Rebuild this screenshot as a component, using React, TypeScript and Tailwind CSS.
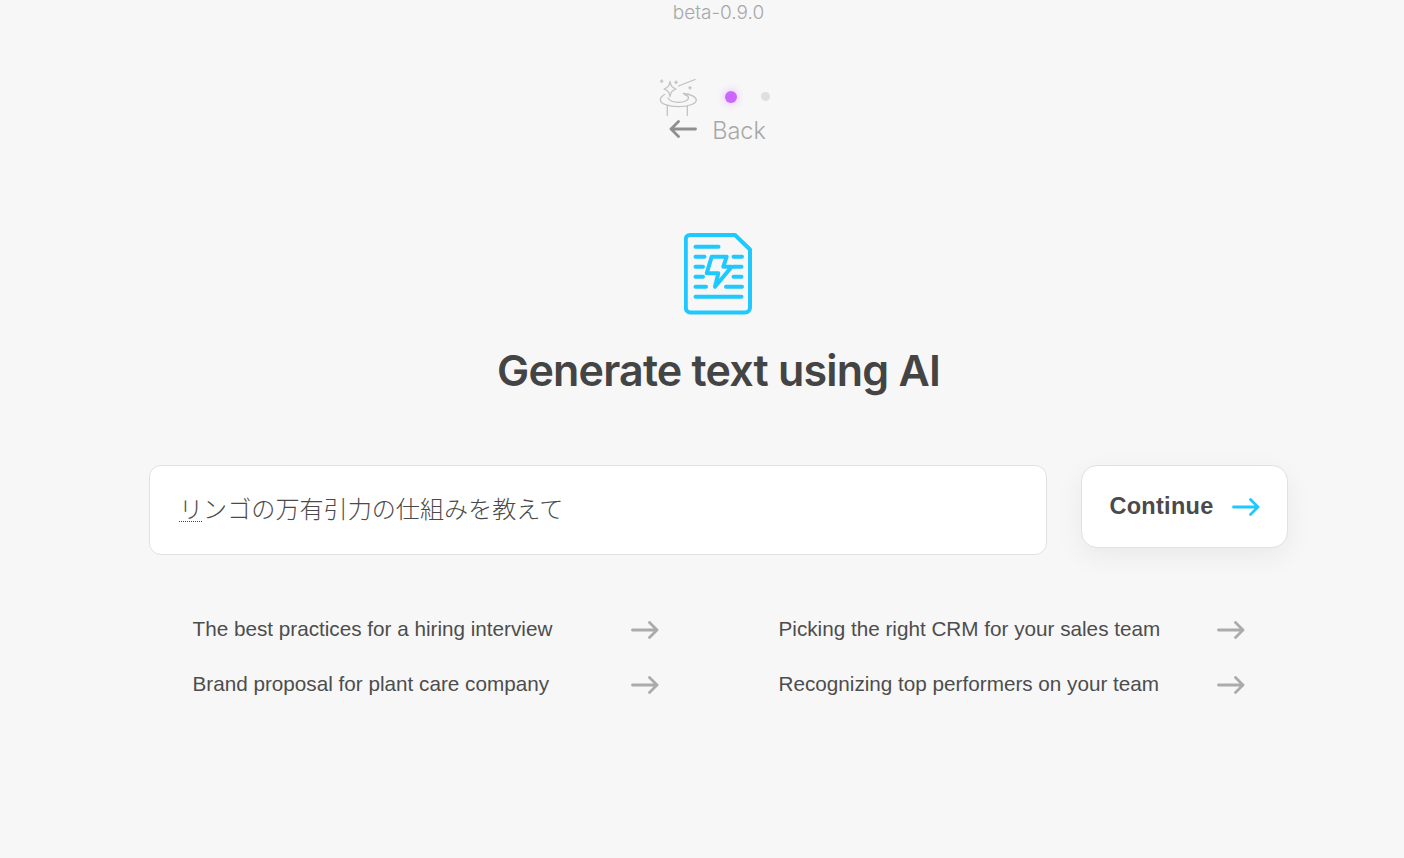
const sans = "font-['Liberation_Sans',Arial,sans-serif]";

function Arrow({ className, left }: { className: string; left?: boolean }) {
  return (
    <svg viewBox="0 0 28 18" fill="none" className={className} stroke="currentColor" strokeWidth="2.8" strokeLinecap="round" strokeLinejoin="round">
      <path d={left ? "M26.500 9H2M9.500 1.500 2 9l7.500 7.500" : "M1.500 9H26M18.500 1.500 26 9l-7.500 7.500"} />
    </svg>
  );
}

function Suggestion({ text }: { text: string }) {
  return (
    <div className="flex h-[55px] items-center justify-between">
      <span className={`${sans} text-[20.7px] leading-none text-[#4d4d4d]`}>{text}</span>
      <Arrow className="h-[18px] w-[28px] text-[#ababab]" />
    </div>
  );
}

export default function App() {
  return (
    <div className={`h-[858px] w-[1404px] overflow-hidden bg-[#f7f7f7] ${sans}`}>
      <div className="ml-[149px] flex w-[1139px] flex-col items-center">
        <div className="mt-[2px] h-[22px] font-['Inter',sans-serif] text-[19px] leading-[22px] font-light text-[#a8a8a8]">beta-0.9.0</div>

        <div className="mt-[53px] mr-[8px] flex h-[39px] items-center">
          <svg viewBox="0 0 38 38" fill="none" className="h-[38px] w-[38px] text-[#c2c2c2]" stroke="currentColor" strokeWidth="1.300" strokeLinecap="round" strokeLinejoin="round">
            <path d="M11 3.500c.8 4.500 2 6 6 7.500-4 1.500-5.200 3-6 7.500-.8-4.500-2-6-6-7.500 4-1.500 5.200-3 6-7.500Z" />
            <path d="M19.500 8 36 1.500M2.700 1.800v2.600M1.400 3.100H4M17 3v2.600M15.700 4.300h2.600M31 8.500v2.600M29.700 9.800h2.600" />
            <path d="M5.500 16.500C3 18 1.300 20 1.300 22c0 3.600 8 6.700 18 6.700s18-3 18-6.700c0-3.200-5.500-5.800-13-6.500" />
            <path d="M9 20c1.500 2.800 5.500 4.300 10.500 4.300 5.500 0 10-2 10-4.300 0-1.500-1.500-2.800-4-3.500" />
            <path d="M8.300 28v9.500M28.300 28v9.500" />
          </svg>
          <span className="ml-[28px] h-[12px] w-[12px] rounded-full bg-[#cc66ff] shadow-[0_0_8px_#e2b0ff]" />
          <span className="ml-[24px] h-[9px] w-[9px] rounded-full bg-[#dfdfdf]" />
        </div>

        <div className="flex h-[30px] items-center font-['Inter',sans-serif] text-[#a8a8a8]">
          <Arrow left className="h-[18px] w-[28px] -translate-x-[2px] -translate-y-[2px] text-[#8f8f8f]" />
          <span className="ml-[13px] text-[23.500px] leading-none font-light">Back</span>
        </div>

        <svg viewBox="0 0 68 82" fill="none" className="mt-[87px] mr-[1px] h-[82px] w-[68px] text-[#1fc8ff]" stroke="currentColor" strokeWidth="4" strokeLinecap="round" strokeLinejoin="round">
          <path d="M6 2h45L66 16.500V74.500c0 2.800-2.200 5-5 5H6.500c-2.800 0-4.700-1.900-4.700-4.700V6.500C1.800 3.700 3.400 2 6 2Z" />
          <path d="M11.500 13.700h23M11.500 23.700h9M11.500 33.700h7.500M11.500 43.700h7.500M11.500 53.700h10.500M11.500 63.700h46M49.500 23.700h8.500M49.500 33.700h8M49.500 43.700h8M42 53.700h16" />
          <path d="M27.700 23.700h15l-3.400 10h8.400L31 53.700l3.300-13.400H22.700l5-16.600Z" />
        </svg>

        <h1 className="mt-[29px] font-['Inter',sans-serif] text-[43px] leading-[52px] font-semibold tracking-[-0.8px] text-[#444444]">Generate text using AI</h1>

        <div className="mt-[69px] flex w-full items-start justify-between">
          <div className="flex h-[90px] w-[898px] items-center rounded-[12px] border border-[#e1e1e1] bg-white pb-[4px] pl-[29px]">
            <span className="font-['Noto_Sans_CJK_JP',sans-serif] text-[24.100px] leading-none font-light text-[#4a4a4a]">
              <span className="underline decoration-dotted decoration-1 underline-offset-[3px]">リ</span>ンゴの万有引力の仕組みを教えて
            </span>
          </div>
          <button className="flex h-[83px] w-[207px] items-center justify-center gap-[18px] rounded-[16px] border border-[#e1e1e1] bg-white shadow-[0_8px_28px_rgba(0,0,0,0.06)]">
            <span className="text-[23.500px] leading-none font-bold tracking-[0.3px] text-[#4a4a4a]">Continue</span>
            <Arrow className="h-[18px] w-[28px] text-[#1fc8ff]" />
          </button>
        </div>

        <div className="mt-[47px] grid w-full grid-cols-[466px_466px] justify-center gap-x-[120px]">
          <Suggestion text="The best practices for a hiring interview" />
          <Suggestion text="Picking the right CRM for your sales team" />
          <Suggestion text="Brand proposal for plant care company" />
          <Suggestion text="Recognizing top performers on your team" />
        </div>
      </div>
    </div>
  );
}
